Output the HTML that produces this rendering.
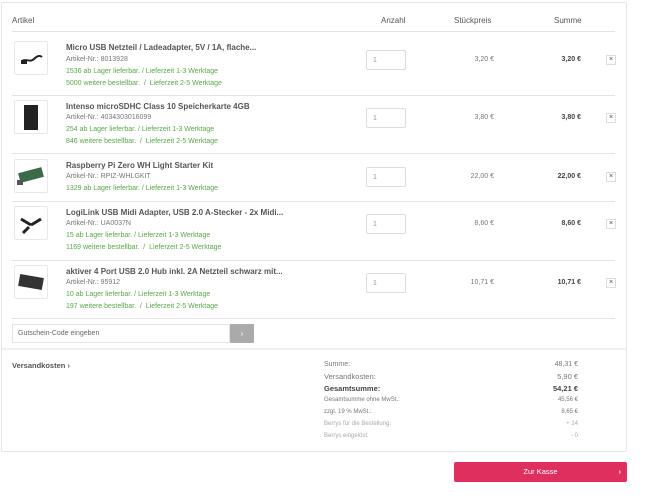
<!DOCTYPE html>
<html><head><meta charset="utf-8"><style>
*{margin:0;padding:0;box-sizing:border-box}
body{width:647px;height:500px;background:#fff;font-family:"Liberation Sans",sans-serif;color:#555;position:relative;overflow:hidden}
.a{position:absolute;white-space:nowrap}
.panel{position:absolute;left:1px;top:2px;width:626px;height:450px;border:1px solid #e6e6e6;border-radius:2px}
.hl{position:absolute;left:12px;width:603px;height:1px;background:#e4e4e4}
.h{font-size:8px;color:#555}
.t{font-size:8px;font-weight:bold;color:#555}
.s{font-size:7px;color:#777}
.g{font-size:7px;color:#5aa84b}
.img{position:absolute;left:14px;width:34px;height:34px;border:1px solid #e8e8e8;border-radius:2px;background:#fff}
.inp{position:absolute;left:366px;width:40px;height:20px;border:1px solid #ddd;border-radius:2px;font-size:7px;color:#999;padding:6px 0 0 6px}
.pr{font-size:7px;color:#777;text-align:right;width:60px;left:434px}
.sm{font-size:7px;color:#444;font-weight:bold;text-align:right;width:60px;left:521px}
.x{position:absolute;left:606px;width:10px;height:10px;border:1px solid #ddd;font-size:7px;text-align:center;line-height:8px;color:#444}
.l{left:324px;font-size:7px;color:#777}
.v{left:518px;width:60px;text-align:right;font-size:7px;color:#777}
</style></head><body>
<div class="panel"></div>
<div class="a h" style="left:12px;top:16px">Artikel</div>
<div class="a h" style="left:381px;top:16px">Anzahl</div>
<div class="a h" style="left:454px;top:16px">Stückpreis</div>
<div class="a h" style="left:554px;top:16px">Summe</div>
<div class="hl" style="top:31px"></div>

<!-- row1 -->
<div class="img" style="top:41px"><svg width="32" height="32"><path d="M7 19c4-3 8 2 12-2 3-3 6-4 8-2" stroke="#222" stroke-width="2" fill="none"/><rect x="6" y="18" width="6" height="4" fill="#222"/></svg></div>
<div class="a t" style="left:66px;top:43px">Micro USB Netzteil / Ladeadapter, 5V / 1A, flache...</div>
<div class="a s" style="left:66px;top:56px">Artikel-Nr.: 8013928</div>
<div class="a g" style="left:66px;top:68px">1536 ab Lager lieferbar. / Lieferzeit 1-3 Werktage</div>
<div class="a g" style="left:66px;top:80px">5000 weitere bestellbar.&nbsp; / &nbsp;Lieferzeit 2-5 Werktage</div>
<div class="inp" style="top:50px">1</div>
<div class="a pr" style="top:56px">3,20 €</div>
<div class="a sm" style="top:56px">3,20 €</div>
<div class="x" style="top:55px">×</div>
<div class="hl" style="top:95px"></div>

<!-- row2 -->
<div class="img" style="top:100px"><svg width="32" height="32"><rect x="9" y="4" width="14" height="25" fill="#222"/></svg></div>
<div class="a t" style="left:66px;top:102px">Intenso microSDHC Class 10 Speicherkarte 4GB</div>
<div class="a s" style="left:66px;top:114px">Artikel-Nr.: 4034303016099</div>
<div class="a g" style="left:66px;top:126px">254 ab Lager lieferbar. / Lieferzeit 1-3 Werktage</div>
<div class="a g" style="left:66px;top:138px">846 weitere bestellbar.&nbsp; / &nbsp;Lieferzeit 2-5 Werktage</div>
<div class="inp" style="top:108px">1</div>
<div class="a pr" style="top:114px">3,80 €</div>
<div class="a sm" style="top:114px">3,80 €</div>
<div class="x" style="top:113px">×</div>
<div class="hl" style="top:153px"></div>

<!-- row3 -->
<div class="img" style="top:159px"><svg width="32" height="32"><rect x="4" y="10" width="24" height="10" fill="#3a6a4a" transform="rotate(-15 16 15)"/><rect x="2" y="20" width="6" height="5" fill="#555"/></svg></div>
<div class="a t" style="left:66px;top:161px">Raspberry Pi Zero WH Light Starter Kit</div>
<div class="a s" style="left:66px;top:173px">Artikel-Nr.: RPIZ-WHLGKIT</div>
<div class="a g" style="left:66px;top:185px">1329 ab Lager lieferbar. / Lieferzeit 1-3 Werktage</div>
<div class="inp" style="top:167px">1</div>
<div class="a pr" style="top:173px">22,00 €</div>
<div class="a sm" style="top:173px">22,00 €</div>
<div class="x" style="top:172px">×</div>
<div class="hl" style="top:201px"></div>

<!-- row4 -->
<div class="img" style="top:206px"><svg width="32" height="32"><path d="M6 12l10 6M16 18l10-6M14 20l-6 6" stroke="#222" stroke-width="3"/></svg></div>
<div class="a t" style="left:66px;top:208px">LogiLink USB Midi Adapter, USB 2.0 A-Stecker - 2x Midi...</div>
<div class="a s" style="left:66px;top:220px">Artikel-Nr.: UA0037N</div>
<div class="a g" style="left:66px;top:232px">15 ab Lager lieferbar. / Lieferzeit 1-3 Werktage</div>
<div class="a g" style="left:66px;top:244px">1169 weitere bestellbar.&nbsp; / &nbsp;Lieferzeit 2-5 Werktage</div>
<div class="inp" style="top:214px">1</div>
<div class="a pr" style="top:220px">8,60 €</div>
<div class="a sm" style="top:220px">8,60 €</div>
<div class="x" style="top:219px">×</div>
<div class="hl" style="top:260px"></div>

<!-- row5 -->
<div class="img" style="top:265px"><svg width="32" height="32"><rect x="4" y="10" width="24" height="12" fill="#333" transform="rotate(10 16 16)"/></svg></div>
<div class="a t" style="left:66px;top:267px">aktiver 4 Port USB 2.0 Hub inkl. 2A Netzteil schwarz mit...</div>
<div class="a s" style="left:66px;top:279px">Artikel-Nr.: 95912</div>
<div class="a g" style="left:66px;top:291px">10 ab Lager lieferbar. / Lieferzeit 1-3 Werktage</div>
<div class="a g" style="left:66px;top:303px">197 weitere bestellbar.&nbsp; / &nbsp;Lieferzeit 2-5 Werktage</div>
<div class="inp" style="top:273px">1</div>
<div class="a pr" style="top:279px">10,71 €</div>
<div class="a sm" style="top:279px">10,71 €</div>
<div class="x" style="top:278px">×</div>
<div class="hl" style="top:318px"></div>

<div class="a" style="left:12px;top:324px;width:218px;height:19px;border:1px solid #e4e4e4;font-size:7px;color:#666;padding:5px 0 0 5px">Gutschein-Code eingeben</div>
<div class="a" style="left:230px;top:324px;width:24px;height:19px;background:#aaa;border-radius:1px;color:#fff;font-size:8px;text-align:center;line-height:19px">›</div>
<div class="a" style="left:2px;top:348px;width:624px;height:2px;background:#f0f0f0"></div>

<div class="a" style="left:12px;top:361px;font-size:7.5px;font-weight:bold;color:#555">Versandkosten ›</div>
<div class="a l" style="top:361px">Summe:</div><div class="a v" style="top:361px">48,31 €</div>
<div class="a l" style="top:372px;font-size:7.5px">Versandkosten:</div><div class="a v" style="top:372px;font-size:7.5px">5,90 €</div>
<div class="a l" style="top:384px;font-weight:bold;color:#444;font-size:7.5px">Gesamtsumme:</div><div class="a v" style="top:384px;font-weight:bold;color:#444;font-size:7.5px">54,21 €</div>
<div class="a l" style="top:397px;font-size:6px">Gesamtsumme ohne MwSt.:</div><div class="a v" style="top:397px;font-size:6px">45,56 €</div>
<div class="a l" style="top:409px;font-size:6px">zzgl. 19 % MwSt.:</div><div class="a v" style="top:409px;font-size:6px">8,65 €</div>
<div class="a l" style="top:421px;font-size:6px;color:#aaa">Berrys für die Bestellung:</div><div class="a v" style="top:421px;font-size:6px;color:#aaa">+ 24</div>
<div class="a l" style="top:433px;font-size:6px;color:#aaa">Berrys eingelöst:</div><div class="a v" style="top:433px;font-size:6px;color:#aaa">- 0</div>

<div class="a" style="left:454px;top:462px;width:173px;height:20px;background:#df2f5e;border-radius:2px;color:#fff;font-size:7.5px;text-align:center;line-height:20px">Zur Kasse<span style="position:absolute;right:6px;font-weight:bold">›</span></div>
</body></html>
